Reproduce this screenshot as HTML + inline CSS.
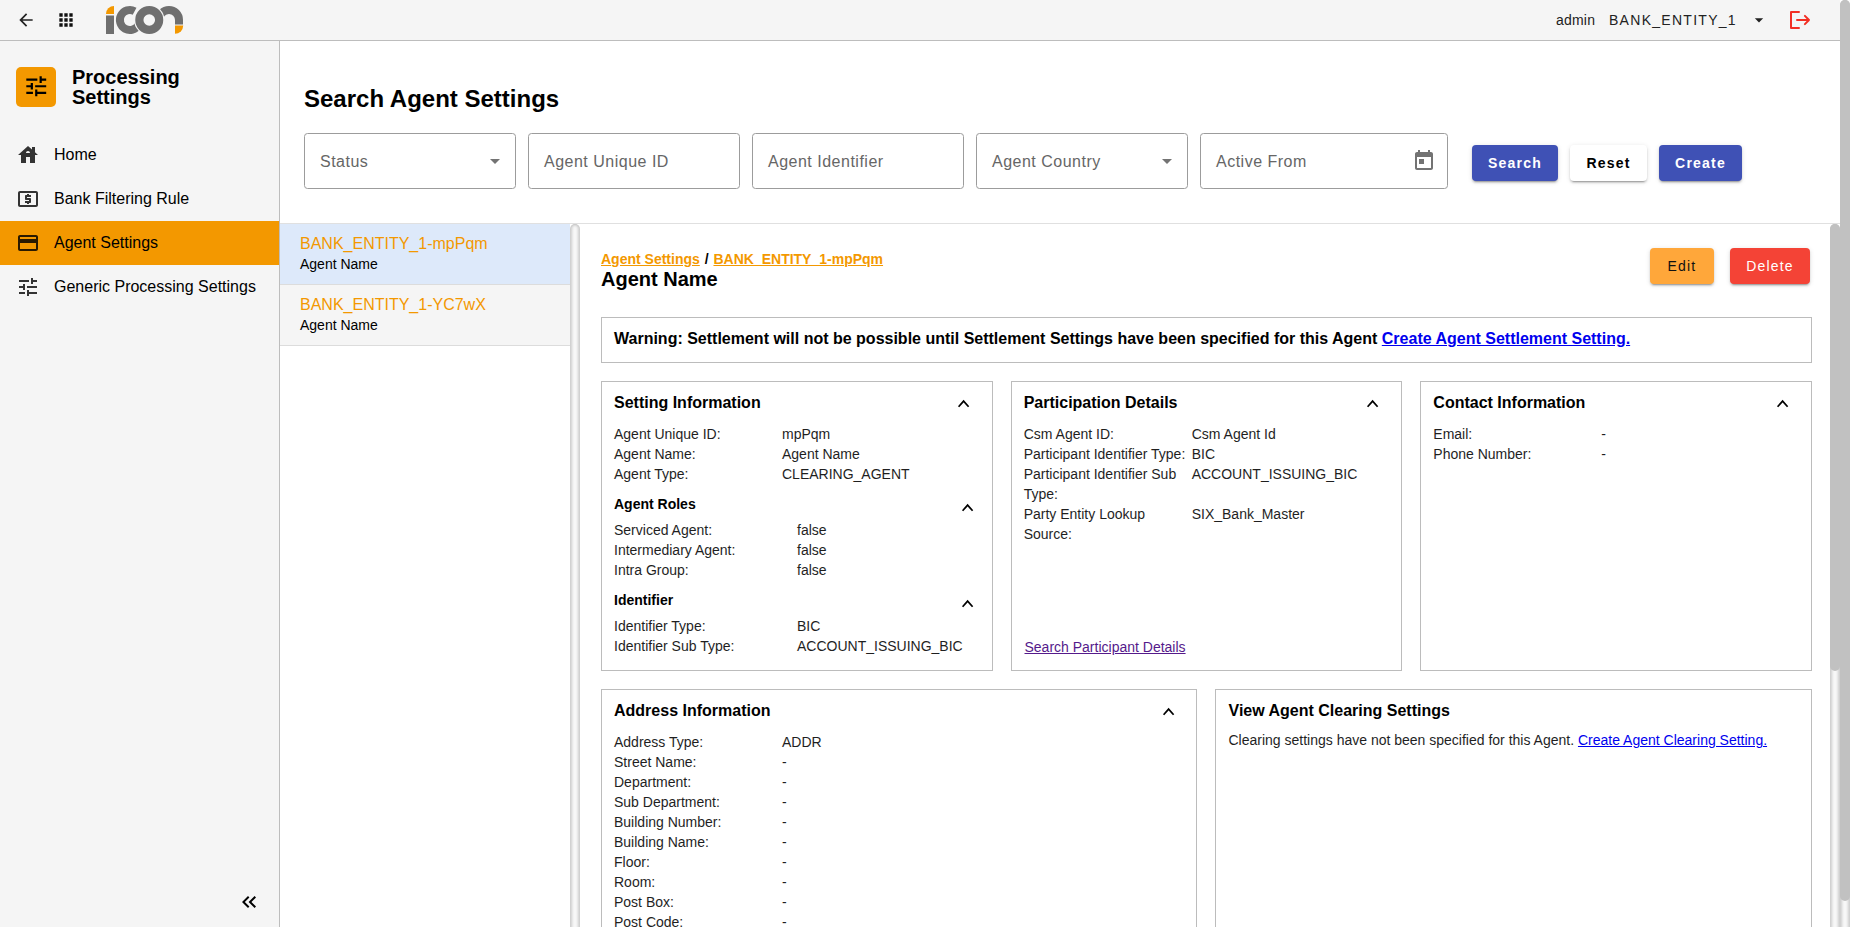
<!DOCTYPE html>
<html><head><meta charset="utf-8">
<style>
*{box-sizing:border-box;margin:0;padding:0}
html,body{width:1850px;height:927px;overflow:hidden;background:#fff;font-family:"Liberation Sans",sans-serif;color:#000}
.a{position:absolute;white-space:nowrap}
.t14{font-size:14px;line-height:20px}
.t16{font-size:16px;line-height:20px}
.b{font-weight:bold}
svg{position:absolute;display:block}
#hdr{position:absolute;left:0;top:0;width:1840px;height:41px;background:#f5f5f5;border-bottom:1px solid #bdbdbd}
#side{position:absolute;left:0;top:41px;width:280px;height:886px;background:#f5f5f5;border-right:1px solid #bdbdbd}
.nav{position:absolute;left:0;width:279px;height:44px}
.nav.act{background:#f39800}
.nav .lbl{position:absolute;left:54px;top:12px;font-size:16px;line-height:20px;white-space:nowrap}
.nav svg{left:16px;top:10px;width:24px;height:24px;fill:#333}
.fld{position:absolute;top:133px;height:56px;border:1px solid #9c9c9c;border-radius:3.5px;background:#fff}
.fld .ph{position:absolute;left:15px;top:18px;font-size:16px;line-height:20px;letter-spacing:0.5px;color:#666;white-space:nowrap}
.btn{position:absolute;height:36px;border-radius:4px;font-size:14px;line-height:36px;text-align:center;letter-spacing:1.2px;
box-shadow:0 3px 1px -2px rgba(0,0,0,.2),0 2px 2px 0 rgba(0,0,0,.14),0 1px 5px 0 rgba(0,0,0,.12)}
.card{position:absolute;border:1px solid #bcbcbc;background:#fff}
.row{position:absolute;font-size:14px;line-height:20px;white-space:nowrap;color:#1f1f1f}
.chev{position:absolute;width:24px;height:24px}
.sb-track{position:absolute;width:10px;border-radius:5px;background:#f8f8f8;box-shadow:inset 2px 0 3px rgba(0,0,0,.18),inset -2px 0 3px rgba(0,0,0,.18)}
.sb-thumb{position:absolute;width:10px;border-radius:5px;background:#c1c1c1}
</style></head><body>

<!-- HEADER -->
<div id="hdr"></div>
<svg style="left:16px;top:10px" width="20" height="20" viewBox="0 0 24 24"><path fill="#222" d="M20 11H7.83l5.59-5.59L12 4l-8 8 8 8 1.41-1.41L7.83 13H20v-2z"/></svg>
<svg style="left:56px;top:10px" width="20" height="20" viewBox="0 0 24 24"><path fill="#111" d="M4 8h4V4H4v4zm6 12h4v-4h-4v4zm-6 0h4v-4H4v4zm0-6h4v-4H4v4zm6 0h4v-4h-4v4zm6-10v4h4V4h-4zm-6 4h4V4h-4v4zm6 6h4v-4h-4v4zm0 6h4v-4h-4v4z"/></svg>
<svg style="left:0;top:0" width="200" height="40" viewBox="0 0 200 40">
 <path fill="#f39800" d="M106 14a8 8 0 0 1 8-8v8z"/>
 <rect fill="#6f6f6f" x="106" y="15.5" width="8" height="18.5"/>
 <path fill="none" stroke="#6f6f6f" stroke-width="8" d="M134.6 11.17A10 10 0 1 0 138.56 25"/>
 <path fill="none" stroke="#6f6f6f" stroke-width="8" d="M159 20A10 10 0 0 1 179 20V24.5"/>
 <path fill="#f39800" d="M175 25.6h8.2a8.2 8.2 0 0 1-8.2 8.2z"/>
 <circle cx="149.25" cy="20" r="15.2" fill="#f5f5f5"/>
 <circle cx="149.25" cy="20" r="9.9" fill="none" stroke="#6f6f6f" stroke-width="8.2"/>
</svg>
<div class="a t14" style="left:1556px;top:10px;color:#222;letter-spacing:0.2px">admin</div>
<div class="a t14" style="left:1609px;top:10px;letter-spacing:1.28px;color:#222">BANK_ENTITY_1</div>
<svg style="left:1749px;top:10px" width="20" height="20" viewBox="0 0 24 24"><path fill="#222" d="M7 10l5 5 5-5z"/></svg>
<svg style="left:1780px;top:5px" width="40" height="30" viewBox="1780 5 40 30"><path fill="none" stroke="#f22f24" stroke-width="2" stroke-linecap="round" stroke-linejoin="round" d="M1799 12H1791V28H1799M1797 20H1809M1804.9 15.9L1809 20L1804.9 24.1"/></svg>

<!-- SIDEBAR -->
<div id="side">
 <div style="position:absolute;left:16px;top:26px;width:40px;height:40px;border-radius:5px;background:#f39800"></div>
 <svg style="left:22.75px;top:31.7px" width="26.5" height="26.5" viewBox="0 0 24 24"><path fill="#000" d="M3 17v2h6v-2H3zM3 5v2h10V5H3zm10 16v-2h8v-2h-8v-2h-2v6h2zM7 9v2H3v2h4v2h2V9H7zm14 4v-2H11v2h10zm-6-4h2V7h4V5h-4V3h-2v6z"/></svg>
 <div class="a b" style="left:72px;top:24px;font-size:20px;line-height:24px">Processing</div>
 <div class="a b" style="left:72px;top:44px;font-size:20px;line-height:24px">Settings</div>

 <div class="nav" style="top:92px"><svg viewBox="0 0 24 24"><path d="M19 9.3V4h-3v2.6L12 3 2 12h3v8h5v-6h4v6h5v-8h3l-3-2.7zm-9 .7c0-1.1.9-2 2-2s2 .9 2 2h-4z"/></svg><div class="lbl">Home</div></div>
 <div class="nav" style="top:136px"><svg viewBox="0 0 24 24"><path d="M11 17h2v-1h1c.55 0 1-.45 1-1v-3c0-.55-.45-1-1-1h-3v-1h4V8h-2V7h-2v1h-1c-.55 0-1 .45-1 1v3c0 .55.45 1 1 1h3v1H9v2h2v1zm9-13H4c-1.11 0-1.99.89-1.99 2L2 18c0 1.11.89 2 2 2h16c1.11 0 2-.89 2-2V6c0-1.11-.89-2-2-2zm0 14H4V6h16v12z"/></svg><div class="lbl">Bank Filtering Rule</div></div>
 <div class="nav act" style="top:180px"><svg viewBox="0 0 24 24" style="fill:#2a1a00"><path d="M20 4H4c-1.11 0-1.99.89-1.99 2L2 18c0 1.11.89 2 2 2h16c1.11 0 2-.89 2-2V6c0-1.11-.89-2-2-2zm0 14H4v-6h16v6zm0-10H4V6h16v2z"/></svg><div class="lbl" style="color:#000">Agent Settings</div></div>
 <div class="nav" style="top:224px"><svg viewBox="0 0 24 24"><path d="M3 17v2h6v-2H3zM3 5v2h10V5H3zm10 16v-2h8v-2h-8v-2h-2v6h2zM7 9v2H3v2h4v2h2V9H7zm14 4v-2H11v2h10zm-6-4h2V7h4V5h-4V3h-2v6z"/></svg><div class="lbl">Generic Processing Settings</div></div>

 <svg style="left:237px;top:849px" width="24" height="24" viewBox="0 0 24 24"><path fill="#000" d="M17.59 18L19 16.59 14.42 12 19 7.41 17.59 6l-6 6z M11 18l1.41-1.41L7.83 12l4.58-4.59L11 6l-6 6z"/></svg>
</div>

<!-- MAIN -->
<div id="main">
 <div class="a b" style="left:304px;top:84px;font-size:24px;line-height:30px">Search Agent Settings</div>
 <div class="fld" style="left:304px;width:212px"><div class="ph">Status</div><svg style="left:178px;top:15px" width="24" height="24" viewBox="0 0 24 24"><path fill="#737373" d="M7 10l5 5 5-5z"/></svg></div>
 <div class="fld" style="left:528px;width:212px"><div class="ph">Agent Unique ID</div></div>
 <div class="fld" style="left:752px;width:212px"><div class="ph">Agent Identifier</div></div>
 <div class="fld" style="left:976px;width:212px"><div class="ph">Agent Country</div><svg style="left:178px;top:15px" width="24" height="24" viewBox="0 0 24 24"><path fill="#737373" d="M7 10l5 5 5-5z"/></svg></div>
 <div class="fld" style="left:1200px;width:248px"><div class="ph">Active From</div><svg style="left:211px;top:15px" width="24" height="24" viewBox="0 0 24 24"><path fill="#737373" d="M19 3h-1V1h-2v2H8V1H6v2H5c-1.11 0-1.99.9-1.99 2L3 19c0 1.1.89 2 2 2h14c1.1 0 2-.9 2-2V5c0-1.1-.9-2-2-2zm0 16H5V8h14v11zM7 10h5v5H7z"/></svg></div>
 <div class="btn b" style="left:1472px;top:145px;width:86px;background:#3f51b5;color:#fff">Search</div>
 <div class="btn b" style="left:1570px;top:145px;width:77px;background:#fff;color:#000">Reset</div>
 <div class="btn b" style="left:1659px;top:145px;width:83px;background:#3f51b5;color:#fff">Create</div>
 <div style="position:absolute;left:280px;top:223px;width:1560px;height:1px;background:#e0e0e0"></div>
<div style="position:absolute;left:280px;top:224px;width:290px;height:61px;background:#dde9fa;border-bottom:1px solid #dcdcdc"></div>
<div class="a t16" style="left:300px;top:234px;color:#f39800">BANK_ENTITY_1-mpPqm</div>
<div class="a t14" style="left:300px;top:254px">Agent Name</div>
<div style="position:absolute;left:280px;top:285px;width:290px;height:61px;background:#f5f5f5;border-bottom:1px solid #dcdcdc"></div>
<div class="a t16" style="left:300px;top:295px;color:#f39800">BANK_ENTITY_1-YC7wX</div>
<div class="a t14" style="left:300px;top:315px">Agent Name</div>
<div class="sb-track" style="left:570px;top:224px;height:740px"></div>
<div class="a b t14" style="left:601px;top:249px;color:#f39800"><span style="text-decoration:underline">Agent Settings</span> <span style="color:#000;margin:0 1px 0 1px">/</span> <span style="text-decoration:underline">BANK_ENTITY_1-mpPqm</span></div>
<div class="a b" style="left:601px;top:267px;font-size:20px;line-height:24px">Agent Name</div>
<div class="btn" style="left:1650px;top:248px;width:64px;background:#ffa73a;color:#111">Edit</div>
<div class="btn" style="left:1730px;top:248px;width:80px;background:#f44336;color:#fff">Delete</div>
<div class="card" style="left:601px;top:317px;width:1211px;height:46px"></div>
<div class="a b t16" style="left:614px;top:329px">Warning: Settlement will not be possible until Settlement Settings have been specified for this Agent <a style="color:#0000ee;text-decoration:underline">Create Agent Settlement Setting.</a></div>
<div class="card" style="left:601px;top:381px;width:392px;height:290px"></div>
<div class="card" style="left:1011px;top:381px;width:391px;height:290px"></div>
<div class="card" style="left:1420px;top:381px;width:392px;height:290px"></div>
<div class="a b t16" style="left:614px;top:393px">Setting Information</div>
<svg class="chev" style="left:952px;top:392px" viewBox="0 0 24 24"><path fill="none" stroke="#000" stroke-width="1.7" d="M6.6 14.8L11.6 9.1L16.6 14.8"/></svg>
<div class="row" style="left:614px;top:424px">Agent Unique ID:</div>
<div class="row" style="left:782px;top:424px">mpPqm</div>
<div class="row" style="left:614px;top:444px">Agent Name:</div>
<div class="row" style="left:782px;top:444px">Agent Name</div>
<div class="row" style="left:614px;top:464px">Agent Type:</div>
<div class="row" style="left:782px;top:464px">CLEARING_AGENT</div>
<div class="a b t14" style="left:614px;top:494px">Agent Roles</div>
<svg class="chev" style="left:955.5px;top:496px" viewBox="0 0 24 24"><path fill="none" stroke="#000" stroke-width="1.7" d="M6.6 14.8L11.6 9.1L16.6 14.8"/></svg>
<div class="row" style="left:614px;top:520px">Serviced Agent:</div>
<div class="row" style="left:797px;top:520px">false</div>
<div class="row" style="left:614px;top:540px">Intermediary Agent:</div>
<div class="row" style="left:797px;top:540px">false</div>
<div class="row" style="left:614px;top:560px">Intra Group:</div>
<div class="row" style="left:797px;top:560px">false</div>
<div class="a b t14" style="left:614px;top:590px">Identifier</div>
<svg class="chev" style="left:955.5px;top:592px" viewBox="0 0 24 24"><path fill="none" stroke="#000" stroke-width="1.7" d="M6.6 14.8L11.6 9.1L16.6 14.8"/></svg>
<div class="row" style="left:614px;top:616px">Identifier Type:</div>
<div class="row" style="left:797px;top:616px">BIC</div>
<div class="row" style="left:614px;top:636px">Identifier Sub Type:</div>
<div class="row" style="left:797px;top:636px">ACCOUNT_ISSUING_BIC</div>
<div class="a b t16" style="left:1023.67px;top:393px">Participation Details</div>
<svg class="chev" style="left:1361px;top:392px" viewBox="0 0 24 24"><path fill="none" stroke="#000" stroke-width="1.7" d="M6.6 14.8L11.6 9.1L16.6 14.8"/></svg>
<div class="row" style="left:1023.67px;top:424px">Csm Agent ID:</div>
<div class="row" style="left:1191.67px;top:424px">Csm Agent Id</div>
<div class="row" style="left:1023.67px;top:444px">Participant Identifier Type:</div>
<div class="row" style="left:1191.67px;top:444px">BIC</div>
<div class="row" style="left:1023.67px;top:464px">Participant Identifier Sub</div>
<div class="row" style="left:1191.67px;top:464px">ACCOUNT_ISSUING_BIC</div>
<div class="row" style="left:1023.67px;top:484px">Type:</div>
<div class="row" style="left:1023.67px;top:504px">Party Entity Lookup</div>
<div class="row" style="left:1191.67px;top:504px">SIX_Bank_Master</div>
<div class="row" style="left:1023.67px;top:524px">Source:</div>
<div class="row" style="left:1024.5px;top:637px;color:#551a8b;text-decoration:underline">Search Participant Details</div>
<div class="a b t16" style="left:1433.33px;top:393px">Contact Information</div>
<svg class="chev" style="left:1771px;top:392px" viewBox="0 0 24 24"><path fill="none" stroke="#000" stroke-width="1.7" d="M6.6 14.8L11.6 9.1L16.6 14.8"/></svg>
<div class="row" style="left:1433.33px;top:424px">Email:</div>
<div class="row" style="left:1601.33px;top:424px">-</div>
<div class="row" style="left:1433.33px;top:444px">Phone Number:</div>
<div class="row" style="left:1601.33px;top:444px">-</div>
<div class="card" style="left:601px;top:689px;width:596px;height:300px"></div>
<div class="card" style="left:1215px;top:689px;width:597px;height:300px"></div>
<div class="a b t16" style="left:614px;top:701px">Address Information</div>
<svg class="chev" style="left:1157px;top:700px" viewBox="0 0 24 24"><path fill="none" stroke="#000" stroke-width="1.7" d="M6.6 14.8L11.6 9.1L16.6 14.8"/></svg>
<div class="row" style="left:614px;top:732px">Address Type:</div>
<div class="row" style="left:782px;top:732px">ADDR</div>
<div class="row" style="left:614px;top:752px">Street Name:</div>
<div class="row" style="left:782px;top:752px">-</div>
<div class="row" style="left:614px;top:772px">Department:</div>
<div class="row" style="left:782px;top:772px">-</div>
<div class="row" style="left:614px;top:792px">Sub Department:</div>
<div class="row" style="left:782px;top:792px">-</div>
<div class="row" style="left:614px;top:812px">Building Number:</div>
<div class="row" style="left:782px;top:812px">-</div>
<div class="row" style="left:614px;top:832px">Building Name:</div>
<div class="row" style="left:782px;top:832px">-</div>
<div class="row" style="left:614px;top:852px">Floor:</div>
<div class="row" style="left:782px;top:852px">-</div>
<div class="row" style="left:614px;top:872px">Room:</div>
<div class="row" style="left:782px;top:872px">-</div>
<div class="row" style="left:614px;top:892px">Post Box:</div>
<div class="row" style="left:782px;top:892px">-</div>
<div class="row" style="left:614px;top:912px">Post Code:</div>
<div class="row" style="left:782px;top:912px">-</div>
<div class="a b t16" style="left:1228.5px;top:701px">View Agent Clearing Settings</div>
<div class="row" style="left:1228.5px;top:730px">Clearing settings have not been specified for this Agent. <a style="color:#0000ee;text-decoration:underline">Create Agent Clearing Setting.</a></div>
<div class="sb-track" style="left:1830px;top:224px;height:740px"></div><div class="sb-thumb" style="left:1830px;top:224px;height:447px"></div>
<div class="sb-track" style="left:1840px;top:0px;height:960px"></div><div class="sb-thumb" style="left:1840px;top:0px;height:901px"></div>
</div>

</body></html>
